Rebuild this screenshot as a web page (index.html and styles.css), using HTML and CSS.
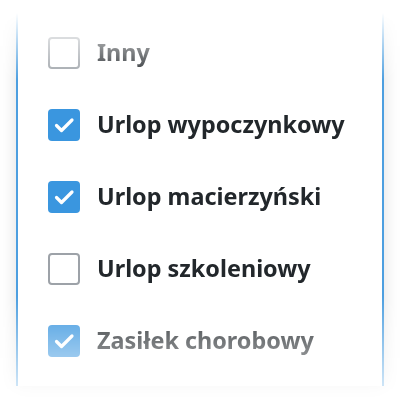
FILE: index.html
```html
<!DOCTYPE html>
<html lang="pl">
<head>
<meta charset="utf-8">
<title>Rodzaj nieobecności</title>
<link rel="stylesheet" href="styles.css">
</head>
<body>
<div class="viewport">
  <section class="sheet">
    <ul class="options">
      <li class="option">
        <span class="box"></span>
        <span class="label">Inny</span>
      </li>
      <li class="option">
        <span class="box is-checked"><svg viewBox="0 0 32 32"><path d="M8.5 16.5 L13.5 21.5 L24 11"/></svg></span>
        <span class="label">Urlop wypoczynkowy</span>
      </li>
      <li class="option">
        <span class="box is-checked"><svg viewBox="0 0 32 32"><path d="M8.5 16.5 L13.5 21.5 L24 11"/></svg></span>
        <span class="label">Urlop macierzyński</span>
      </li>
      <li class="option">
        <span class="box"></span>
        <span class="label">Urlop szkoleniowy</span>
      </li>
      <li class="option">
        <span class="box is-checked"><svg viewBox="0 0 32 32"><path d="M8.5 16.5 L13.5 21.5 L24 11"/></svg></span>
        <span class="label">Zasiłek chorobowy</span>
      </li>
    </ul>
  </section>
</div>
</body>
</html>
```
FILE: styles.css
```css
html, body {
  margin: 0;
  background: #fff;
}

body {
  font-family: "Noto Sans", "Open Sans", sans-serif;
  color: #22272b;
}

/* scrolling list window, faded at the top and bottom */
.viewport {
  height: 400px;
  box-sizing: border-box;
  padding: 13px 16px 14px;
  -webkit-mask-image: linear-gradient(to bottom, transparent 13px, #000 80px, #000 296px, transparent 420px);
  mask-image: linear-gradient(to bottom, transparent 13px, #000 80px, #000 296px, transparent 420px);
}

.sheet {
  height: 100%;
  box-sizing: border-box;
  background: #fff;
  border-left: 2px solid #4d9fe0;
  border-right: 2px solid #4d9fe0;
  box-shadow: 0 0 16px rgba(0, 0, 0, 0.13);
  padding: 4px 0 0 30px;
}

.options {
  list-style: none;
  margin: 0;
  padding: 0;
}

.option {
  height: 72px;
  display: flex;
  align-items: center;
  gap: 17px;
}

.box {
  width: 32px;
  height: 32px;
  box-sizing: border-box;
  border: 2px solid #9da2a8;
  border-radius: 4px;
  flex: none;
}

.box.is-checked {
  border: none;
  background: #3a96df;
}

.box svg {
  display: block;
  width: 32px;
  height: 32px;
  fill: none;
  stroke: #fff;
  stroke-width: 3.2;
  stroke-linecap: round;
  stroke-linejoin: round;
}

.label {
  font-size: 23.4px;
  font-weight: 700;
  line-height: 1;
}
```
